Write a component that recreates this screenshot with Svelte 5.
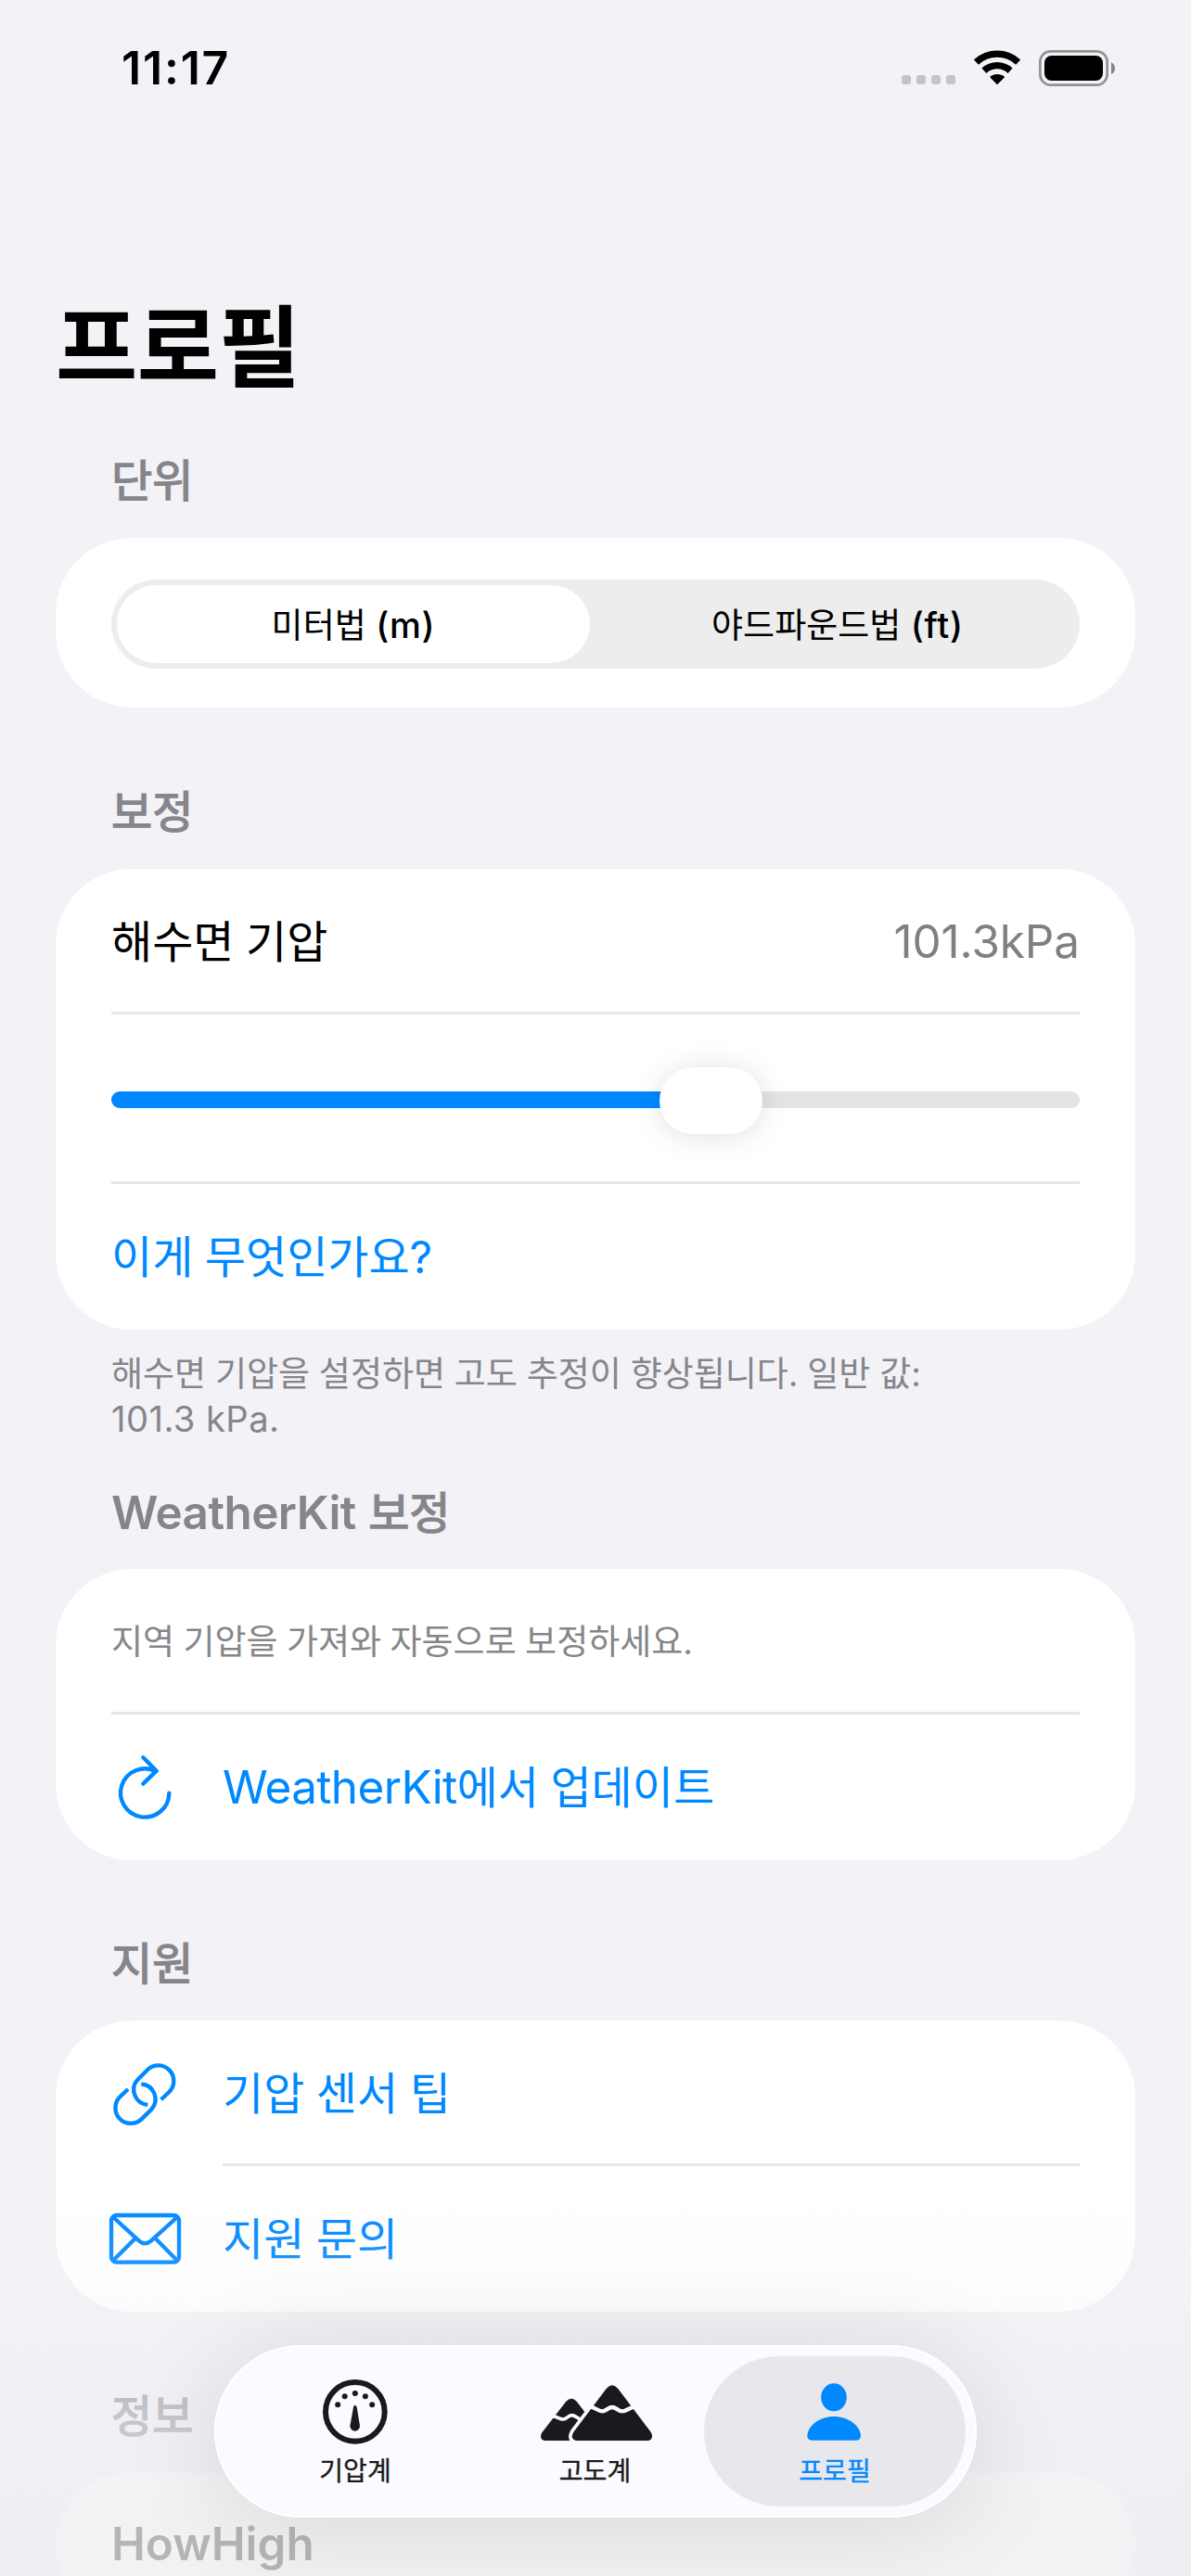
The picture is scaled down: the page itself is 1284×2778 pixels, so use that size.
<script>
  const pressure = 101.3;
  const sliderFill = 62;

  const tabs = [
    { id: 'barometer', label: '기압계' },
    { id: 'altimeter', label: '고도계' },
    { id: 'profile', label: '프로필' }
  ];
  let activeTab = $state('profile');
  let unit = $state('m');
</script>

<div class="screen">
  <header class="status">
    <span class="time">11:17</span>
    <div class="indicators">
      <div class="dots"><i></i><i></i><i></i><i></i></div>
      <svg class="wifi" viewBox="331 71 152 113">
        <g fill="none" stroke="#000" stroke-width="22">
          <path d="M338.100 110.300A99.500 99.500 0 0 1 473.900 110.300" />
          <path d="M363.700 137.700A62 62 0 0 1 448.300 137.700" />
        </g>
        <path d="M406 183L384 160Q382 157 385 155Q406 143 428 155Q431 157 429 160Z" />
      </svg>
      <svg class="battery" viewBox="540 69 246 117">
        <rect x="544" y="73" width="217" height="109" rx="34" fill="none" stroke="#929295" stroke-width="8" />
        <rect x="558" y="87" width="189" height="81" rx="23" />
        <path d="M774 109Q786 115 786 128Q786 141 774 147Z" fill="#87878a" />
      </svg>
    </div>
  </header>

  <h1>프로필</h1>

  <main>
    <section>
      <h2>단위</h2>
      <div class="card units">
        <div class="segmented">
          <button class:on={unit === 'm'} onclick={() => (unit = 'm')}>미터법&nbsp;<span class="lat">(m)</span></button>
          <button class:on={unit === 'ft'} onclick={() => (unit = 'ft')}>야드파운드법&nbsp;<span class="lat">(ft)</span></button>
        </div>
      </div>
    </section>

    <section>
      <h2>보정</h2>
      <div class="card">
        <div class="row spread">
          <span class="name">해수면 기압</span>
          <span class="value lat">{pressure}kPa</span>
        </div>
        <hr />
        <div class="row slider-row">
          <div class="track">
            <div class="fill" style="width: {sliderFill}%"></div>
            <div class="thumb" style="left: {sliderFill}%"></div>
          </div>
        </div>
        <hr />
        <div class="row last link"><span class="text">이게 무엇인가요?</span></div>
      </div>
      <p class="footnote">해수면 기압을 설정하면 고도 추정이 향상됩니다. 일반 값:<br /><span class="lat">101.3 kPa.</span></p>
    </section>

    <section class="tight">
      <h2><span class="lat">WeatherKit</span>&nbsp;보정</h2>
      <div class="card">
        <div class="row caption"><span>지역 기압을 가져와 자동으로 보정하세요.</span></div>
        <hr />
        <div class="row last link">
          <span class="icon">
            <svg class="refresh" viewBox="84 98 170 208">
              <path d="M247 220A78.500 78.500 0 1 1 205 150" />
              <path d="M163 105L206 148L163 190" />
            </svg>
          </span>
          <span class="text"><span class="lat">WeatherKit</span>에서 업데이트</span>
        </div>
      </div>
    </section>

    <section>
      <h2>지원</h2>
      <div class="card">
        <div class="row link">
          <span class="icon">
            <svg class="chain" viewBox="65 44 203 202">
              <path d="M220 162L246 137A50 50 0 0 0 175.600 65.600L143.600 97.600A49 49 0 0 0 177 178.500" />
              <path d="M220 162L246 137A50 50 0 0 0 175.600 65.600L143.600 97.600A49 49 0 0 0 177 178.500" transform="rotate(180 166.500 145)" />
            </svg>
          </span>
          <span class="text upper">기압 센서 팁</span>
        </div>
        <hr class="inset" />
        <div class="row last link">
          <span class="icon">
            <svg class="mail" viewBox="54 532 231 164">
              <rect x="60" y="538" width="219" height="152" rx="17" />
              <path d="M66 544L149 620Q169 638 189 620L273 544M66 684L138 612M273 684L202 612" />
            </svg>
          </span>
          <span class="text">지원 문의</span>
        </div>
      </div>
    </section>

    <section>
      <h2>정보</h2>
      <div class="card">
        <div class="row how"><span class="lat">HowHigh</span></div>
      </div>
    </section>
  </main>

  <div class="fade"></div>

  <nav>
    {#each tabs as tab (tab.id)}
      <button class="tab" class:active={activeTab === tab.id} onclick={() => (activeTab = tab.id)}>
        <span class="glyph">
          {#if tab.id === 'barometer'}
            <svg class="gauge" viewBox="384 139 209 209">
              <circle cx="488.500" cy="243.500" r="95.500" fill="none" stroke="currentColor" stroke-width="18" />
              <circle cx="432.500" cy="221" r="9" />
              <circle cx="455" cy="194" r="9" />
              <circle cx="488.500" cy="184" r="9" />
              <circle cx="521.500" cy="194" r="9" />
              <circle cx="543.500" cy="221" r="9" />
              <path d="M483 229Q488 216 494 229L504 290A16 16 0 1 1 472 290Z" />
            </svg>
          {:else if tab.id === 'altimeter'}
            <svg class="peaks" viewBox="1088 154 361 182">
              <path d="M1105 335Q1080 332 1092 308L1170 207Q1187 189 1204 207L1260 280L1240 335Z" />
              <path class="cut" d="M1128 255C1145 258 1148 265 1160 265S1176 252 1188 252S1205 262 1215 264" stroke-width="11" />
              <path class="front" d="M1207 335Q1180 331 1194 306L1300 166Q1319 144 1338 166L1444 306Q1457 331 1432 335Z" />
              <path class="cut" d="M1246 224C1270 228 1272 239 1286 239S1306 226 1319 226S1338 239 1352 239S1370 228 1394 224" stroke-width="13" />
            </svg>
          {:else}
            <svg class="person" viewBox="389 181 175 186">
              <ellipse cx="476" cy="227" rx="41.500" ry="45" />
              <path d="M404 366Q390 365 390 351C392 318 430 289 476 289S561 318 563 351Q563 365 549 366Z" />
            </svg>
          {/if}
        </span>
        <span class="label">{tab.label}</span>
      </button>
    {/each}
  </nav>
</div>

<style>
  :global(body) {
    margin: 0;
    background: #f2f2f7;
  }
  .screen {
    position: relative;
    width: 1284px;
    height: 2778px;
    overflow: hidden;
    background: #f2f2f7;
    color: #000;
    font-family: Inter, 'Noto Sans CJK KR', sans-serif;
    font-size: 48px;
  }
  button {
    border: 0;
    padding: 0;
    background: none;
    font: inherit;
    color: inherit;
  }
  .lat {
    font-size: 1.03em;
    letter-spacing: -0.013em;
  }

  .status {
    display: flex;
    justify-content: space-between;
    align-items: center;
    height: 146px;
    padding: 0 82px 0 131px;
    box-sizing: border-box;
  }
  .time {
    font-size: 50px;
    font-weight: 600;
    letter-spacing: 1.800px;
  }
  .indicators {
    display: flex;
    align-items: center;
  }
  .dots {
    display: flex;
    gap: 6px;
    margin: 26px 20px 0 0;
  }
  .dots i {
    width: 10px;
    height: 10px;
    border-radius: 3px;
    background: #c3c3c8;
  }
  .wifi {
    width: 50.700px;
    height: 37.700px;
    margin-right: 19px;
  }
  .battery {
    width: 82px;
    height: 39px;
  }

  h1 {
    margin: 0;
    padding: 173px 60px 0;
    height: 312px;
    box-sizing: border-box;
    font-size: 96px;
    line-height: 110px;
    font-weight: 700;
    letter-spacing: -0.500px;
  }

  main {
    padding: 0 60px;
  }
  section {
    margin-bottom: 52px;
  }
  section.tight {
    margin-bottom: 51px;
  }
  h2 {
    margin: 0;
    padding-left: 60px;
    height: 122px;
    line-height: 122px;
    font-size: 48px;
    font-weight: 400;
    -webkit-text-stroke: 1.400px currentColor;
    color: #85858b;
  }
  h2 .lat {
    font-weight: 600;
    letter-spacing: -0.011em;
    -webkit-text-stroke: 0;
  }
  .card {
    background: #fff;
    border-radius: 82px;
  }
  .row {
    display: flex;
    align-items: center;
    height: 154px;
    padding: 0 60px;
    box-sizing: border-box;
  }
  .row.last {
    height: 157px;
  }
  .spread {
    justify-content: space-between;
  }
  .name {
    padding-bottom: 4px;
    word-spacing: -1px;
  }
  .value {
    padding-top: 2px;
    letter-spacing: -0.002em;
    color: #808080;
  }
  .link {
    color: #0088ff;
  }
  .text {
    padding-bottom: 8px;
    word-spacing: -1px;
  }
  .upper {
    padding-bottom: 5px;
  }
  hr {
    margin: 0 60px;
    border: 0;
    height: 3px;
    background: #e6e6e6;
  }
  hr.inset {
    margin-left: 180px;
  }

  .units {
    padding: 45px 60px 42px;
  }
  .segmented {
    display: grid;
    grid-template-columns: 510px 1fr;
    gap: 12px;
    height: 96px;
    padding: 6px;
    box-sizing: border-box;
    border-radius: 48px;
    background: #ededed;
    font-size: 37px;
  }
  .segmented button {
    padding-bottom: 3px;
    border-radius: 42px;
  }
  .segmented .lat {
    font-weight: 500;
    letter-spacing: 0.02em;
  }
  .segmented .on {
    background: #fff;
  }

  .slider-row {
    height: 180px;
  }
  .track {
    position: relative;
    width: 100%;
    height: 18px;
    margin-top: 3px;
    border-radius: 9px;
    background: #e4e4e4;
  }
  .fill {
    height: 100%;
    border-radius: 9px;
    background: #0088ff;
  }
  .thumb {
    position: absolute;
    top: -26px;
    width: 111px;
    height: 72px;
    margin-left: -56px;
    border-radius: 36px;
    background: #fff;
    box-shadow: 0 2px 32px rgba(0, 0, 0, 0.12);
  }

  .footnote {
    margin: 0;
    height: 136px;
    padding: 23px 60px 0;
    box-sizing: border-box;
    font-size: 37px;
    line-height: 49px;
    word-spacing: -0.600px;
    color: #85858b;
  }
  .footnote .lat {
    letter-spacing: 0.012em;
    word-spacing: 0;
  }
  section:has(.footnote) {
    margin-bottom: 0;
  }
  .caption {
    padding-bottom: 2px;
    font-size: 37px;
    word-spacing: -1px;
    color: #868688;
  }

  .icon {
    display: flex;
    justify-content: center;
    width: 72px;
    margin-right: 48px;
  }
  .icon svg {
    flex: none;
    fill: none;
    stroke: currentColor;
    stroke-width: 13;
    overflow: visible;
  }
  .refresh {
    width: 56.700px;
    height: 69.300px;
    stroke-linecap: round;
    stroke-linejoin: round;
  }
  .chain {
    width: 67.700px;
    height: 67.300px;
    margin-top: 5px;
  }
  .mail {
    width: 77px;
    height: 54.700px;
  }
  .how {
    padding-bottom: 3px;
    font-weight: 600;
  }
  .how .lat {
    letter-spacing: 0;
  }

  .fade {
    position: absolute;
    inset: auto 0 0 0;
    height: 420px;
    background: linear-gradient(
      rgba(240, 240, 244, 0) 0%,
      rgba(240, 240, 244, 0.16) 28%,
      rgba(239, 239, 243, 0.6) 58%,
      rgba(238, 238, 242, 0.76) 85%
    );
  }

  nav {
    position: absolute;
    left: 231px;
    top: 2529px;
    display: flex;
    width: 822px;
    height: 186px;
    box-sizing: border-box;
    padding: 12px 11px;
    border-radius: 93px;
    background: #fbfbff;
    box-shadow:
      inset 0 0 0 2px #fff,
      0 8px 110px rgba(0, 0, 0, 0.11);
    color: #1a1a1e;
  }
  .tab {
    display: flex;
    flex-direction: column;
    align-items: center;
    flex: none;
    width: 282px;
    height: 162px;
    margin-right: -23.500px;
    border-radius: 81px;
  }
  .tab.active {
    background: #e8e8ec;
    color: #0088ff;
  }
  .glyph {
    display: flex;
    align-items: center;
    justify-content: center;
    height: 120px;
    flex: none;
  }
  .glyph svg {
    fill: currentColor;
  }
  .label {
    margin-top: -12px;
    font-size: 28px;
    line-height: 32px;
    -webkit-text-stroke: 0.400px currentColor;
  }
  .gauge {
    width: 69.700px;
    height: 69.700px;
  }
  .peaks {
    width: 120.300px;
    height: 60.700px;
    margin: 2px 0 0 3px;
  }
  .peaks .cut {
    fill: none;
    stroke: #fbfbff;
  }
  .peaks .front {
    stroke: #fbfbff;
    stroke-width: 22;
    paint-order: stroke;
  }
  .person {
    width: 58.300px;
    height: 62px;
    margin-right: 2px;
  }
</style>
